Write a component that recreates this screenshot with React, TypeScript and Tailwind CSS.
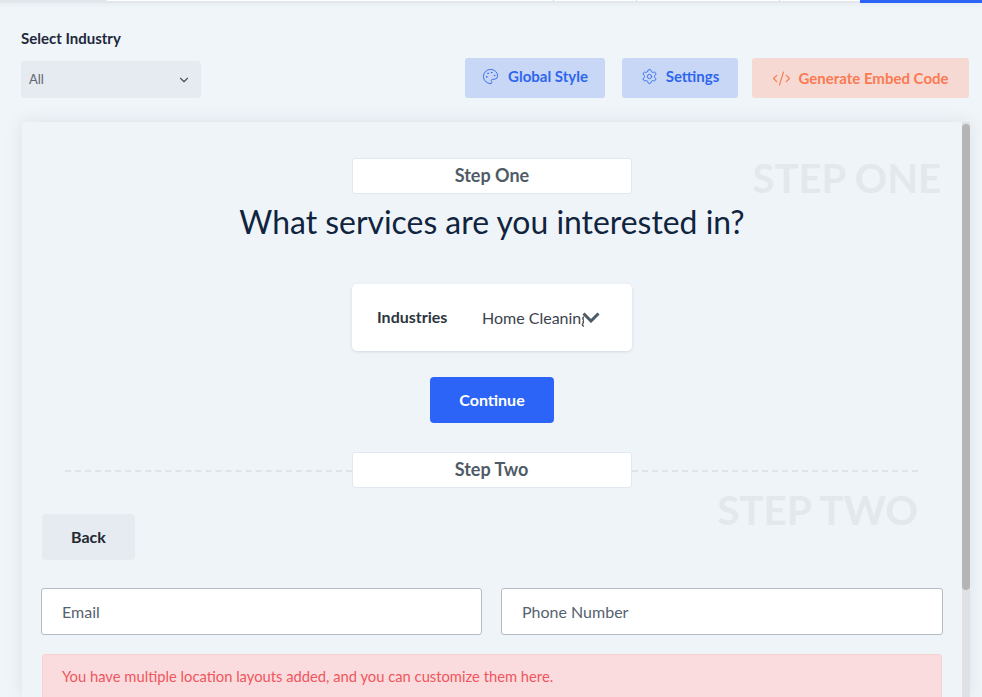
import { ChevronDown, Palette, Settings, CodeXml } from 'lucide-react';

const StepLabel = ({ children }: { children: string }) => (
  <div className="mx-auto flex h-[36px] w-[280px] items-center justify-center rounded-[3px] border border-[#e2e8f0] bg-white pb-[2px] text-[18px] font-bold text-[#4f5b67]">
    {children}
  </div>
);

export default function App() {
  return (
    <div className="flex h-[697px] w-[982px] flex-col overflow-hidden bg-[#f0f5f9] font-['Lato',sans-serif]">
      <div className="flex h-[3px] shrink-0 border-b-2 border-[#e2e7ed] bg-white shadow-[0_2px_4px_rgba(100,116,139,0.08)]">
        <div className="h-full w-[107px] bg-[#e2e7ed]" />
        <div className="h-full w-[446px]" />
        <div className="h-full w-[83px] border-l border-[#cfd4da]" />
        <div className="h-full w-[143px] border-l border-[#cfd4da]" />
        <div className="h-full w-[81px] border-l border-[#cfd4da]" />
        <div className="h-[3px] w-[122px] bg-[#2b64f6]" />
      </div>

      <div className="flex shrink-0 items-end justify-between pl-[21px] pr-[13px] pt-[25px]">
        <div>
          <label className="block text-[15px] font-bold leading-[20px] text-[#1e293b]">Select Industry</label>
          <div className="mt-[13px] flex h-[37px] w-[180px] items-center justify-between rounded-[4px] bg-[#e6ebf2] pl-[8px] pr-[10px] text-[13px] text-[#5f6670]">
            <span>All</span>
            <ChevronDown size={14} strokeWidth={2} className="text-[#4a5058]" />
          </div>
        </div>
        <div className="flex items-end">
          <button className="flex h-[40px] w-[140px] items-center justify-center gap-[9px] rounded-[3px] bg-[#c7d7f5] pb-[4px] text-[15px] font-bold text-[#2f66ee]">
            <Palette size={17} strokeWidth={1.25} />
            Global Style
          </button>
          <button className="ml-[17px] flex h-[40px] w-[116px] items-center justify-center gap-[8px] rounded-[3px] bg-[#c7d7f5] pb-[4px] text-[15px] font-bold text-[#2f66ee]">
            <Settings size={17} strokeWidth={1.25} />
            Settings
          </button>
          <button className="ml-[14px] flex h-[40px] w-[217px] items-center justify-center gap-[7px] rounded-[3px] bg-[#f5d9d2] text-[15px] font-bold text-[#fb7a52]">
            <CodeXml size={19} strokeWidth={1.5} />
            Generate Embed Code
          </button>
        </div>
      </div>

      <div className="ml-[22px] mr-[12px] mt-[24px] flex min-h-0 flex-1 bg-[#eff4f9] shadow-[0_0_16px_rgba(100,116,139,0.14)]">
        <div className="relative min-w-0 flex-1 pt-[36px]">
          <StepLabel>Step One</StepLabel>
          <div className="absolute right-[21px] top-[31px] text-[40px] font-bold leading-[50px] text-[#e3e8ed]">STEP ONE</div>
          <h1 className="mt-[9px] pb-[2px] text-center text-[31.9px] font-normal leading-[38px] text-[#10243e]">What services are you interested in?</h1>

          <div className="mx-auto mt-[41px] flex h-[67px] w-[280px] items-center rounded-[5px] bg-white pl-[25px] shadow-[0_1px_3px_rgba(100,116,139,0.2)]">
            <span className="w-[105px] pb-[2px] text-[16px] font-bold text-[#2d3540]">Industries</span>
            <span className="flex w-[119px] items-center text-[16px] text-[#3c434d]">
              <span className="w-[102px] overflow-hidden whitespace-nowrap">Home Cleaning</span>
              <svg width="18" height="11" viewBox="0 0 18 11" fill="none" stroke="#4d5b66" strokeWidth="3" className="-ml-[2px] shrink-0">
                <path d="M1.5 1.5 9 9l7.5-7.5" />
              </svg>
            </span>
          </div>

          <button className="mx-auto mt-[26px] flex h-[46px] w-[124px] items-center justify-center rounded-[4px] bg-[#2b64f6] text-[16px] font-bold text-white">
            Continue
          </button>

          <div className="relative mt-[29px] flex items-center pl-[43px] pr-[44px]">
            <div className="mt-[2px] flex-1 border-t-2 border-dashed border-[#dfe4ea]" />
            <div className="w-[280px]">
              <StepLabel>Step Two</StepLabel>
            </div>
            <div className="mt-[2px] flex-1 border-t-2 border-dashed border-[#dfe4ea]" />
            <div className="absolute right-[44px] top-[33px] text-[40.4px] font-bold leading-[50px] text-[#e3e8ed]">STEP TWO</div>
          </div>

          <button className="ml-[20px] mt-[26px] flex h-[46px] w-[93px] items-center justify-center rounded-[4px] bg-[#e6ebf2] text-[16px] font-bold text-[#23272e]">
            Back
          </button>

          <div className="ml-[19px] mt-[28px] flex w-[902px] gap-[19px]">
            <div className="flex h-[47px] w-[441px] items-center rounded-[3px] border border-[#b5bcc4] bg-white pl-[20px] text-[16px] text-[#56626f]">Email</div>
            <div className="flex h-[47px] w-[442px] items-center rounded-[3px] border border-[#b5bcc4] bg-white pl-[20px] text-[16px] text-[#56626f]">Phone Number</div>
          </div>

          <div className="ml-[20px] mt-[19px] h-[60px] w-[900px] rounded-[3px] border border-[#fbd0d3] bg-[#fbdcde] pl-[19px] pt-[10px] text-[14.75px] leading-[22px] text-[#f0555c]">
            You have multiple location layouts added, and you can customize them here.
          </div>
        </div>
        <div className="w-[8px] shrink-0 bg-[#e0e1e4]">
          <div className="mt-[2px] h-[466px] rounded-full bg-[#b5b5b5]" />
        </div>
      </div>
    </div>
  );
}
